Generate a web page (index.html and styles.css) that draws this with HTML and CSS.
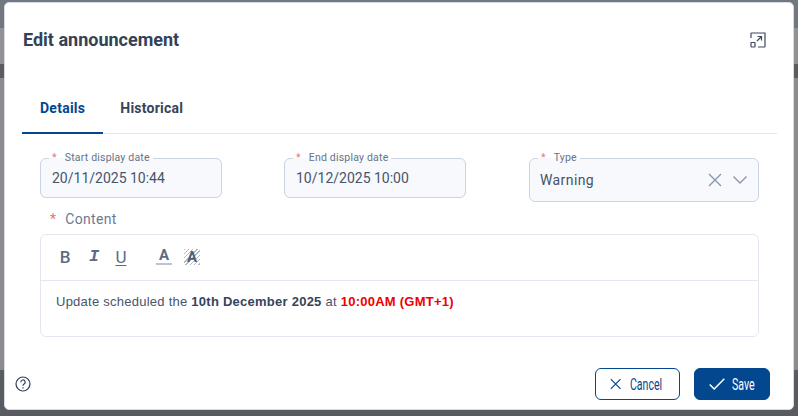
FILE: index.html
```html
<!DOCTYPE html>
<html lang="en">
<head>
  <meta charset="UTF-8">
  <title>Edit announcement</title>
  <link rel="stylesheet" href="styles.css">
</head>
<body>
  <div class="overlay">
    <div class="modal">
      <div class="modal-head">
        <h2 class="modal-title">Edit announcement</h2>
        <svg class="expand-icon" width="16" height="16" viewBox="0 0 16 16" fill="none" stroke="#3c4a60" stroke-width="1.2">
          <path d="M1 6V1.500a.5.5 0 0 1 .5-.5H15v13.500a.5.5 0 0 1-.5.5H8"/>
          <rect x="1" y="10.500" width="4" height="4.500" rx=".5"/>
          <path d="M7 9l4.500-4.500M7.500 4.500h4v4"/>
        </svg>
      </div>

      <div class="tabs">
        <div class="tab active">Details</div>
        <div class="tab">Historical</div>
      </div>

      <div class="fields">
        <div class="field date-field">
          <div class="legend"><span class="star">*</span>Start display date</div>
          <div class="value">20/11/2025 10:44</div>
        </div>
        <div class="field date-field">
          <div class="legend"><span class="star">*</span>End display date</div>
          <div class="value">10/12/2025 10:00</div>
        </div>
        <div class="field type-field">
          <div class="legend"><span class="star">*</span>Type</div>
          <div class="value">Warning</div>
          <svg width="14" height="14" viewBox="0 0 14 14" fill="none" stroke="#8a97ab" stroke-width="1.4"><path d="M1 1l12 12M13 1L1 13"/></svg>
          <svg class="chevron" width="14" height="8" viewBox="0 0 14 8" fill="none" stroke="#8a97ab" stroke-width="1.4"><path d="M.5 .5L7 7l6.500-6.500"/></svg>
        </div>
      </div>

      <div class="content-label"><span class="star">*</span>Content</div>
      <div class="editor">
        <div class="toolbar">
          <span class="tool tool-b">B</span>
          <span class="tool tool-i">I</span>
          <span class="tool tool-u">U</span>
          <span class="tool tool-color">A</span>
          <span class="tool tool-bg">A</span>
        </div>
        <div class="editor-text">Update scheduled the <b>10th December 2025</b> at <b class="red">10:00AM (GMT+1)</b></div>
      </div>

      <div class="modal-foot">
        <svg width="16" height="16" viewBox="0 0 16 16" fill="none" stroke="#2c3e5c" stroke-width="1.200">
          <circle cx="8" cy="8" r="7"/>
          <path d="M5.800 6.200a2.200 2.200 0 1 1 3.300 1.900c-.7.400-1.100.8-1.100 1.700"/>
          <path d="M8 11.300v1.200"/>
        </svg>
        <div class="actions">
          <button class="btn btn-cancel">
            <svg width="14" height="14" viewBox="0 0 14 14" fill="none" stroke="#03478f" stroke-width="1.500"><path d="M1 1l12 12M13 1L1 13"/></svg>
            <span class="btn-label">Cancel</span>
          </button>
          <button class="btn btn-save">
            <svg width="16" height="12" viewBox="0 0 16 12" fill="none" stroke="#fff" stroke-width="1.500"><path d="M.7 6.500l4.500 4.500L15.300 .7"/></svg>
            <span class="btn-label">Save</span>
          </button>
        </div>
      </div>
    </div>
  </div>
</body>
</html>
```

FILE: styles.css
```css
html, body {
  margin: 0;
  padding: 0;
  height: 100%;
  overflow: hidden;
  font-family: Roboto, "Liberation Sans", sans-serif;
}

.overlay {
  box-sizing: border-box;
  height: 416px;
  padding: 2px 4px 6px;
  background: linear-gradient(#71777f 0 28px, #929292 28px 64px, #5c5c5c 64px 78px, #8c8c8c 78px 370px, #585c61 370px);
}

.modal {
  box-sizing: border-box;
  height: 408px;
  display: flex;
  flex-direction: column;
  background: #fff;
  border: 1px solid #d5dbe6;
  border-radius: 5px;
  padding: 0 17px;
}

.modal-head {
  display: flex;
  justify-content: space-between;
  align-items: center;
  height: 73px;
}
.modal-title {
  margin: 0 0 0 1px;
  font-size: 18px;
  font-weight: 700;
  color: #334258;
}
.expand-icon { margin-right: 10px; }

.tabs {
  display: flex;
  gap: 0;
  height: 58px;
  box-sizing: border-box;
  border-bottom: 1px solid #e2e6ef;
  margin-right: -1px;
}
.tab {
  padding: 0 17px;
  line-height: 65px;
  font-size: 14px;
  letter-spacing: .25px;
  font-weight: 700;
  color: #36445a;
}
.tab.active {
  color: #03478f;
  padding: 0 18px;
  height: 58px;
  box-sizing: border-box;
  border-bottom: 2px solid #03478f;
}

.fields {
  display: flex;
  gap: 62px;
  align-items: flex-start;
  margin: 24px 17px 0 18px;
}
.field {
  position: relative;
  box-sizing: border-box;
  background: #f7f9fc;
  border: 1px solid #cbd4e2;
  border-radius: 6px;
  display: flex;
  align-items: center;
}
.date-field {
  width: 182px;
  height: 40px;
  padding: 0 11px;
}
.type-field {
  width: 230px;
  height: 44px;
  margin-left: auto;
  padding: 0 11px 0 10px;
  gap: 11px;
}
.value {
  font-size: 14px;
  color: #47546a;
}
.type-field .value {
  flex: 1;
  letter-spacing: .4px;
}
.legend {
  position: absolute;
  top: -7px;
  left: 8px;
  padding: 0 3px;
  font-size: 10.500px;
  line-height: 12px;
  color: #667389;
  letter-spacing: .2px;
  background: linear-gradient(#fff 50%, #f7f9fc 50%);
}
.star {
  color: #e87575;
  margin-right: 8px;
}

.content-label {
  margin: 9px 0 0 28px;
  font-size: 14px;
  line-height: 16px;
  letter-spacing: .3px;
  color: #6d7a8f;
}
.content-label .star { margin-right: 9px; }

.editor {
  box-sizing: border-box;
  height: 103px;
  margin: 7px 17px 0 18px;
  border: 1px solid #e4e7f0;
  border-radius: 6px;
}
.toolbar {
  height: 46px;
  box-sizing: border-box;
  border-bottom: 1px solid #e4e7f0;
  display: flex;
  align-items: center;
  padding: 0 0 2px 17px;
}
.tool {
  width: 14px;
  text-align: center;
  font-size: 17px;
  font-weight: 500;
  color: #5b6b85;
}
.tool-i {
  margin-left: 15px;
  font-style: italic;
  font-weight: 700;
  font-family: "Liberation Mono", monospace;
  font-size: 17px;
}
.tool-u {
  margin-left: 13px;
  font-weight: 400;
  text-decoration: underline;
  text-underline-offset: 2px;
}
.tool-color {
  margin-left: 28px;
  width: 16px;
  font-weight: 700;
  font-size: 15px;
  line-height: 15px;
  border-bottom: 2px solid #bcc4d2;
}
.tool-bg {
  margin-left: 12px;
  width: 16px;
  height: 16px;
  line-height: 16px;
  font-weight: 700;
  font-size: 15px;
  color: #4f5e78;
  background: repeating-linear-gradient(135deg, #b4bbc8 0 1px, #fff 1px 3px);
}
.editor-text {
  padding: 14px 15px;
  font-family: "Liberation Sans", sans-serif;
  font-size: 13px;
  line-height: 14px;
  letter-spacing: .25px;
  color: #47546a;
}
.editor-text b { color: #36445a; }
.editor-text .red { color: #f00000; }

.modal-foot {
  margin-top: auto;
  display: flex;
  justify-content: space-between;
  align-items: center;
  margin-right: 6px;
  margin-left: -7px;
  padding-bottom: 9px;
}
.actions {
  display: flex;
  gap: 14px;
}
.btn {
  box-sizing: border-box;
  height: 32px;
  display: flex;
  align-items: center;
  justify-content: flex-start;
  gap: 8px;
  border: 1px solid #03478f;
  border-radius: 6px;
  font-family: Roboto, sans-serif;
  font-size: 16px;
  padding: 0 0 0 14px;
}
.btn-cancel {
  width: 85px;
  background: #fff;
  color: #03478f;
}
.btn-cancel .btn-label { margin-left: 1px; }
.btn-save {
  width: 76px;
  background: #03478f;
  color: #fff;
}
.btn-save .btn-label { margin-left: -1px; }
.btn-label {
  display: inline-block;
  transform: scaleX(.66);
  transform-origin: left center;
}
```
